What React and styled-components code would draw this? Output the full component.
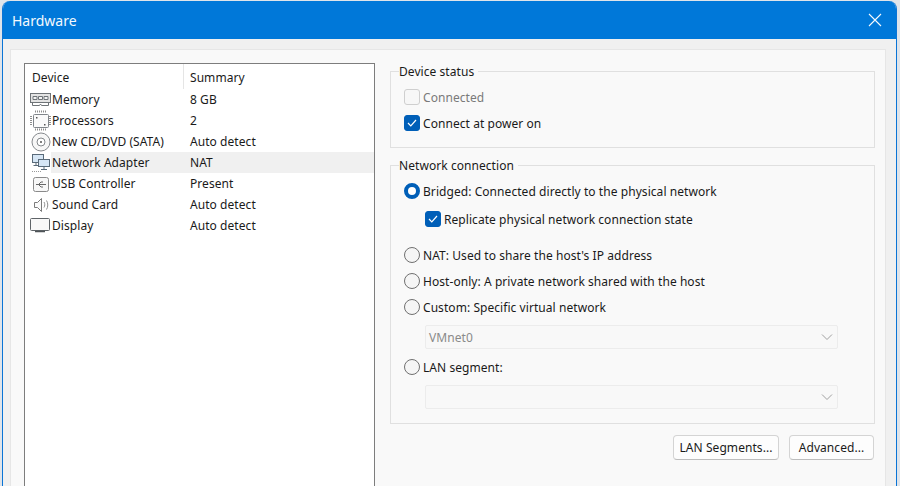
import React from 'react';
import styled, { createGlobalStyle } from 'styled-components';

const GlobalStyle = createGlobalStyle`
  html, body {
    margin: 0;
    height: 486px;
    overflow: hidden;
    background: #dfe4ea;
  }
  * {
    box-sizing: border-box;
  }
`;

const DialogWindow = styled.div`
  width: 895px;
  height: 485px;
  margin: 1px 0 0 2px;
  background: #f0f0f0;
  border-left: 1px solid #0a74d6;
  border-right: 1px solid #0a74d6;
  border-radius: 8px 8px 0 0;
  overflow: hidden;
  font-family: 'Noto Sans', 'Liberation Sans', sans-serif;
  font-size: 12px;
  letter-spacing: 0.06px;
  color: #1a1a1a;
`;

const TitleBar = styled.header`
  height: 38px;
  background: #0078d9;
  display: flex;
  align-items: center;
  justify-content: space-between;
  padding: 0 14px 0 9px;
  color: #f4f9fd;
  font-size: 14px;
  letter-spacing: 0;
`;

const CloseButton = styled.svg`
  width: 14px;
  height: 14px;
`;

const Body = styled.div`
  padding: 10px 10px 0 7px;
`;

const Panel = styled.div`
  height: 440px;
  background: #f9f9f9;
  border: 1px solid #e6e6e6;
  border-bottom: 0;
  padding: 13px 10px 0 13px;
  display: flex;
  gap: 15px;
`;

const DeviceList = styled.div`
  width: 351px;
  height: 430px;
  flex: none;
  background: #fff;
  border: 1px solid #7d7d7d;
  border-bottom: 0;
`;

const ListHeader = styled.div`
  display: flex;
  height: 25px;
  align-items: center;
`;

const HeaderCell = styled.div`
  width: ${(props) => props.$width}px;
  height: 100%;
  padding: 1px 0 0 ${(props) => props.$pad}px;
  display: flex;
  align-items: center;
  border-right: ${(props) => (props.$divider ? '1px solid #e5e5e5' : '0')};
`;

const DeviceRow = styled.div`
  height: 21px;
  display: flex;
  align-items: center;
  padding-left: 4px;
`;

const IconSlot = styled.svg`
  width: 22px;
  height: 21px;
  flex: none;
`;

const DeviceName = styled.div`
  width: 139px;
  height: 100%;
  display: flex;
  align-items: center;
  padding-left: 1px;
  flex: none;
  background: ${(props) => (props.$selected ? '#f0f0f0' : 'transparent')};
`;

const DeviceSummary = styled.div`
  flex: 1;
  height: 100%;
  display: flex;
  align-items: center;
  background: ${(props) => (props.$selected ? '#f0f0f0' : 'transparent')};
`;

const SettingsColumn = styled.div`
  width: 485px;
  flex: none;
  padding-top: 1px;
  display: flex;
  flex-direction: column;
`;

const GroupBox = styled.fieldset`
  margin: 0 0 10px;
  padding: 0 0 0 13px;
  height: ${(props) => props.$height}px;
  border: 1px solid #e0e0e0;
  min-width: 0;
  display: block;
`;

const GroupTitle = styled.legend`
  margin-left: -5px;
  height: 14px;
  padding: 2px 4px 0 0;
  font-size: 12px;
  line-height: 12px;
  background: transparent;
`;

const OptionRow = styled.label`
  display: flex;
  align-items: center;
  gap: 3px;
  height: 20px;
  margin-top: ${(props) => props.$top}px;
  margin-left: ${(props) => props.$indent || 0}px;
  color: ${(props) => (props.$disabled ? '#7a7a7a' : '#1a1a1a')};
`;

const CheckBox = styled.span`
  width: 16px;
  height: 16px;
  border-radius: 3px;
  flex: none;
  display: flex;
  align-items: center;
  justify-content: center;
  background: ${(props) => (props.$checked ? '#005fb8' : '#f7f7f7')};
  border: 1px solid ${(props) => (props.$checked ? '#005fb8' : '#cfcfcf')};
`;

const Radio = styled.span`
  width: 16px;
  height: 16px;
  border-radius: 50%;
  flex: none;
  background: ${(props) => (props.$checked ? '#fff' : '#f5f5f5')};
  border: ${(props) => (props.$checked ? '4.5px solid #005fb8' : '1px solid #707070')};
`;

const SelectBox = styled.div`
  width: 413px;
  height: 24px;
  margin: ${(props) => props.$top}px 0 0 21px;
  background: #f8f8f8;
  border: 1px solid #ececec;
  border-radius: 2px;
  display: flex;
  align-items: center;
  justify-content: space-between;
  padding: 0 4px 0 3px;
  color: #8a8a8a;
`;

const Chevron = styled.svg`
  width: 12px;
  height: 8px;
`;

const ButtonRow = styled.div`
  display: flex;
  justify-content: flex-end;
  gap: 10px;
  margin-top: 1px;
  padding-right: 1px;
`;

const PushButton = styled.button`
  width: ${(props) => props.$width}px;
  height: 25px;
  padding: 0;
  background: #fdfdfd;
  border: 1px solid #d4d4d4;
  border-bottom-color: #bdbdbd;
  border-radius: 4px;
  font: inherit;
  letter-spacing: inherit;
  color: #1a1a1a;
`;

const stroke = { fill: 'none', stroke: '#6f7478', strokeWidth: 1 };

const icons = {
  memory: (
    <g {...stroke}>
      <rect x="1.5" y="4.500" width="20" height="9" fill="#e4e4e4" />
      <path d="M4 7.500h4v3H4zM9.500 7.500h4v3h-4zM15 7.500h4v3h-4z" fill="#f4f4f4" />
      <path d="M3.500 13.500v3h7l1-1.500 1 1.500h7v-3" />
    </g>
  ),
  cpu: (
    <g {...stroke}>
      <rect x="4.500" y="4.500" width="15" height="13" rx="1" fill="#fafafa" stroke="#80858a" />
      <path d="M6 1.500h12M6 19.500h12M2 6v10M21 6v10" stroke="#8d8d8d" strokeWidth="2" strokeDasharray="1 1" />
      <path d="M7 7h1.500v1.500H7zM15 14h1.500v1.500H15z" fill="#555" stroke="none" />
    </g>
  ),
  disc: (
    <g {...stroke}>
      <circle cx="12" cy="11" r="9" fill="#f7f7f7" stroke="#85898d" />
      <circle cx="12" cy="11" r="4" fill="#fff" stroke="#85898d" />
      <circle cx="12" cy="11" r="1" fill="#555" stroke="none" />
    </g>
  ),
  network: (
    <g {...stroke}>
      <rect x="3.500" y="2.500" width="11" height="8" fill="#d6e6f5" stroke="#5a6b7a" />
      <rect x="9.500" y="7.500" width="11" height="7" fill="#d6e6f5" stroke="#5a6b7a" />
      <path d="M7 10.500v3M4.500 13.500h5M15 14.500v2.500M12 17.500h6" stroke="#5a6b7a" />
      <path d="M3 19.500h10" strokeDasharray="1 1" stroke="#9a9a9a" />
    </g>
  ),
  usb: (
    <g {...stroke}>
      <rect x="4.500" y="4.500" width="15" height="14" rx="2" fill="#f7f7f7" stroke="#8a8a8a" />
      <path d="M7 11.500h10M9.500 11.500l2.500-2.500h2M9.500 11.500l2.500 2.500h2" stroke="#666" />
    </g>
  ),
  sound: (
    <g {...stroke}>
      <path d="M5.500 8.500h3l4-4v13l-4-4h-3z" fill="#fafafa" stroke="#7b7b7b" />
      <path d="M15 8c1 1.500 1 4 0 5.500M17.500 6.500c1.700 2.500 1.700 6.500 0 9" stroke="#8f8f8f" />
    </g>
  ),
  display: (
    <g {...stroke}>
      <rect x="1.500" y="3.500" width="19" height="12" rx="1" fill="#f8f8f8" stroke="#5f6468" />
      <path d="M6 16.500h10" stroke="#4f5458" strokeWidth="1.500" />
    </g>
  ),
};

const devices = [
  { icon: 'memory', name: 'Memory', summary: '8 GB' },
  { icon: 'cpu', name: 'Processors', summary: '2' },
  { icon: 'disc', name: 'New CD/DVD (SATA)', summary: 'Auto detect' },
  { icon: 'network', name: 'Network Adapter', summary: 'NAT', selected: true },
  { icon: 'usb', name: 'USB Controller', summary: 'Present' },
  { icon: 'sound', name: 'Sound Card', summary: 'Auto detect' },
  { icon: 'display', name: 'Display', summary: 'Auto detect' },
];

function Tick() {
  return (
    <svg width="10" height="8" viewBox="0 0 10 8">
      <path d="M1 4l2.800 2.800L9 1" fill="none" stroke="#fff" strokeWidth="1.200" />
    </svg>
  );
}

function ChevronDown() {
  return (
    <Chevron viewBox="0 0 12 8">
      <path d="M1 1.500l5 5 5-5" fill="none" stroke="#a0a0a0" strokeWidth="1" />
    </Chevron>
  );
}

export default function App() {
  return (
    <>
      <GlobalStyle />
      <DialogWindow>
        <TitleBar>
          <span>Hardware</span>
          <CloseButton viewBox="0 0 14 14">
            <path d="M1 1l12 12M13 1L1 13" stroke="#f4f9fd" strokeWidth="1.100" fill="none" />
          </CloseButton>
        </TitleBar>
        <Body>
          <Panel>
            <DeviceList>
              <ListHeader>
                <HeaderCell $width={159} $pad={7} $divider>Device</HeaderCell>
                <HeaderCell $width={190} $pad={6}>Summary</HeaderCell>
              </ListHeader>
              {devices.map((d) => (
                <DeviceRow key={d.name}>
                  <IconSlot viewBox="0 0 22 21">{icons[d.icon]}</IconSlot>
                  <DeviceName $selected={d.selected}>{d.name}</DeviceName>
                  <DeviceSummary $selected={d.selected}>{d.summary}</DeviceSummary>
                </DeviceRow>
              ))}
            </DeviceList>
            <SettingsColumn>
              <GroupBox $height={84}>
                <GroupTitle>Device status</GroupTitle>
                <OptionRow $top={9} $disabled>
                  <CheckBox />
                  Connected
                </OptionRow>
                <OptionRow $top={6}>
                  <CheckBox $checked><Tick /></CheckBox>
                  Connect at power on
                </OptionRow>
              </GroupBox>
              <GroupBox $height={266}>
                <GroupTitle>Network connection</GroupTitle>
                <OptionRow $top={9}>
                  <Radio $checked />
                  Bridged: Connected directly to the physical network
                </OptionRow>
                <OptionRow $top={8} $indent={21}>
                  <CheckBox $checked><Tick /></CheckBox>
                  Replicate physical network connection state
                </OptionRow>
                <OptionRow $top={16}>
                  <Radio />
                  NAT: Used to share the host's IP address
                </OptionRow>
                <OptionRow $top={6}>
                  <Radio />
                  Host-only: A private network shared with the host
                </OptionRow>
                <OptionRow $top={6}>
                  <Radio />
                  Custom: Specific virtual network
                </OptionRow>
                <SelectBox $top={8}>
                  <span>VMnet0</span>
                  <ChevronDown />
                </SelectBox>
                <OptionRow $top={8}>
                  <Radio />
                  LAN segment:
                </OptionRow>
                <SelectBox $top={8}>
                  <span />
                  <ChevronDown />
                </SelectBox>
              </GroupBox>
              <ButtonRow>
                <PushButton $width={106}>LAN Segments...</PushButton>
                <PushButton $width={85}>Advanced...</PushButton>
              </ButtonRow>
            </SettingsColumn>
          </Panel>
        </Body>
      </DialogWindow>
    </>
  );
}
